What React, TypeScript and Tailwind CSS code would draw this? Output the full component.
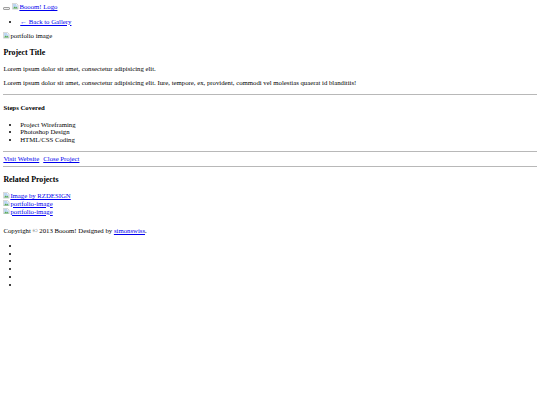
import React from 'react';

// Chrome's broken-image glyph, drawn small
const BrokenImage = () => (
  <svg
    viewBox="0 0 16 16"
    className="inline-block w-[6.5px] h-[6.5px] align-[-0.5px] mr-[0.5px]"
  >
    <path d="M1 1h10l4 4v10H1z" fill="#fff" stroke="#a8a8a8" strokeWidth="1.2" />
    <path d="M2.5 2.5h8v3.5h3.5v7.5h-11z" fill="#bcd7f2" />
    <path d="M2.5 13.5l4-5 3 3 2-2 2.5 4z" fill="#5aa84a" />
  </svg>
);

const ImgLink = ({ alt }: { alt: string }) => (
  <a href="#" className="text-[#0000ee] underline decoration-[0.5px]">
    <BrokenImage />
    {alt}
  </a>
);

const App = () => {
  const steps = ['Project Wireframing', 'Photoshop Design', 'HTML/CSS Coding'];
  const related = ['Image by RZDESIGN', 'portfolio-image', 'portfolio-image'];

  return (
    <div className="min-h-screen bg-white text-black font-['Liberation_Serif','Times_New_Roman',serif] text-[6.75px] leading-[1.15] p-[3.375px]">
      <header>
        <div>
          <span className="inline-block align-[-1px] w-[7px] h-[3px] bg-[#efefef] border-[0.5px] border-[#a0a0a0] rounded-[1px] mr-[2px]" />
          <ImgLink alt="Booom! Logo" />
        </div>
        <ul className="list-disc pl-[2.5em] my-[1em]">
          <li>
            <a href="#" className="text-[#0000ee] underline decoration-[0.5px]">
              ← Back to Gallery
            </a>
          </li>
        </ul>
      </header>

      <div>
        <BrokenImage />
        portfolio image
      </div>

      <h3 className="text-[1.17em] font-bold my-[1em]">Project Title</h3>
      <p className="my-[1em]">Lorem ipsum dolor sit amet, consectetur adipisicing elit.</p>
      <p className="my-[1em]">
        Lorem ipsum dolor sit amet, consectetur adipisicing elit. Iure, tempore, ex,
        provident, commodi vel molestias quaerat id blanditiis!
      </p>

      <hr className="my-[3.375px] border-t-[1px] border-[#b8b8b8]" />

      <h4 className="font-bold my-[1.33em]">Steps Covered</h4>
      <ul className="list-disc pl-[2.5em] my-[1em]">
        {steps.map((s) => (
          <li key={s}>{s}</li>
        ))}
      </ul>

      <hr className="my-[3.375px] border-t-[1px] border-[#b8b8b8]" />

      <div>
        <a href="#" className="text-[#0000ee] underline decoration-[0.5px] mr-[4px]">
          Visit Website
        </a>
        <a href="#" className="text-[#0000ee] underline decoration-[0.5px]">
          Close Project
        </a>
      </div>

      <hr className="my-[3.375px] border-t-[1px] border-[#b8b8b8]" />

      <h3 className="text-[1.17em] font-bold my-[1em]">Related Projects</h3>
      <div className="mb-[12px]">
        {related.map((r, i) => (
          <div key={i}>
            <ImgLink alt={r} />
          </div>
        ))}
      </div>

      <footer>
        <p className="my-[1em]">
          Copyright © 2013 Booom! Designed by{' '}
          <a href="#" className="text-[#0000ee] underline decoration-[0.5px]">
            simonswiss
          </a>
          .
        </p>
        <ul className="list-disc pl-[2.5em] my-[1em]">
          {[0, 1, 2, 3, 4, 5].map((i) => (
            <li key={i}>&nbsp;</li>
          ))}
        </ul>
      </footer>
    </div>
  );
};

export default App;
